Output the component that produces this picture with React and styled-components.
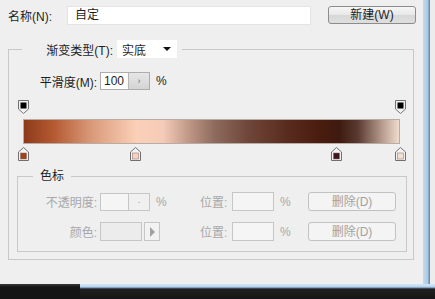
import styled, { createGlobalStyle } from "styled-components";

const GlobalStyle = createGlobalStyle`
  html, body {
    margin: 0;
    padding: 0;
    background: #efefef;
  }
  body {
    font-family: "Liberation Sans", "Noto Sans CJK SC", sans-serif;
    font-size: 12px;
    color: #1e1e1e;
  }
`;

const gradientStops = [
  "#8e3a1a 0%",
  "#b55a32 8%",
  "#d99a7a 18%",
  "#fbd0b8 30%",
  "#f4ccb7 37%",
  "#b89080 45%",
  "#8c6a5c 51%",
  "#6e4638 60%",
  "#5a2c20 70%",
  "#4a1c10 79%",
  "#3e1a0e 84%",
  "#5a3a30 89%",
  "#b09488 95%",
  "#f0dccc 100%",
];

const topStops = [{ at: 0 }, { at: 100 }];

const bottomStops = [
  { at: 0, color: "#a0401c" },
  { at: 29.8, color: "#f6d2c2" },
  { at: 83, color: "#3e1620" },
  { at: 100, color: "#f2e0d2" },
];

export default function App() {
  return (
    <>
      <GlobalStyle />
      <Screen>
        <Dialog>
          <NameRow>
            <NameLabel>名称(N):</NameLabel>
            <NameInput>自定</NameInput>
            <Button>新建(W)</Button>
          </NameRow>

          <Group>
            <GroupLegend>
              <LegendLabel>渐变类型(T):</LegendLabel>
              <Select>
                实底
                <SelectArrow />
              </Select>
            </GroupLegend>

            <SmoothRow>
              <SmoothLabel>平滑度(M):</SmoothLabel>
              <SpinBox>
                <SpinValue>100</SpinValue>
                <SpinButton>›</SpinButton>
              </SpinBox>
              <Percent>%</Percent>
            </SmoothRow>

            <Editor>
              <StopTrack>
                {topStops.map((s) => (
                  <StopHolder key={s.at} style={{ left: `${s.at}%` }}>
                    <svg width="11" height="14" viewBox="0 0 11 14">
                      <path
                        d="M0.5 0.5 H10.5 V9 L5.5 13.5 L0.5 9 Z"
                        fill="#f2f2f2"
                        stroke="#707070"
                      />
                      <rect x="2.5" y="2.5" width="6" height="6" fill="#000" />
                    </svg>
                  </StopHolder>
                ))}
              </StopTrack>
              <GradientBar />
              <StopTrack $bottom>
                {bottomStops.map((s) => (
                  <StopHolder key={s.at} style={{ left: `${s.at}%` }}>
                    <svg width="11" height="14" viewBox="0 0 11 14">
                      <path
                        d="M0.5 5 L5.5 0.5 L10.5 5 V13.5 H0.5 Z"
                        fill="#f2f2f2"
                        stroke="#707070"
                      />
                      <rect
                        x="2.5"
                        y="6"
                        width="6"
                        height="6"
                        fill={s.color}
                        stroke="#8a6a60"
                        strokeWidth="0.5"
                      />
                    </svg>
                  </StopHolder>
                ))}
              </StopTrack>
            </Editor>

            <StopGroup>
              <StopLegend>色标</StopLegend>
              <StopGrid>
                <FieldLabel>不透明度:</FieldLabel>
                <Cell>
                  <SpinBox $disabled>
                    <SpinValue $disabled />
                    <SpinButton $disabled>·</SpinButton>
                  </SpinBox>
                  <Percent $disabled>%</Percent>
                </Cell>
                <FieldLabel $left>位置:</FieldLabel>
                <BlankInput />
                <Percent $disabled>%</Percent>
                <Button $disabled>删除(D)</Button>

                <FieldLabel>颜色:</FieldLabel>
                <Cell>
                  <ColorBox />
                  <ArrowButton />
                </Cell>
                <FieldLabel $left>位置:</FieldLabel>
                <BlankInput />
                <Percent $disabled>%</Percent>
                <Button $disabled>删除(D)</Button>
              </StopGrid>
            </StopGroup>
          </Group>
        </Dialog>
        <RightFrame />
        <BottomFrame>
          <TaskbarLeft />
          <TaskbarRight />
        </BottomFrame>
      </Screen>
    </>
  );
}

const Screen = styled.div`
  width: 435px;
  height: 299px;
  display: grid;
  grid-template-columns: 423px 12px;
  grid-template-rows: 284px 15px;
  overflow: hidden;
`;

const Dialog = styled.div`
  display: flex;
  flex-direction: column;
`;

const RightFrame = styled.div`
  background: linear-gradient(
    to right,
    #c4dbef 0px,
    #a9c9e8 5px,
    #6f8eae 6px,
    #6f8eae 7px,
    #ececec 7px
  );
`;

const BottomFrame = styled.div`
  grid-column: 1 / -1;
  display: flex;
`;

const TaskbarLeft = styled.div`
  width: 80px;
  background: linear-gradient(#3a3a3a, #151515 3px);
`;

const TaskbarRight = styled.div`
  flex: 1;
  background: linear-gradient(
    #d6e8f7 0px,
    #b3d2ee 3px,
    #5f7890 4px,
    #202020 5px,
    #151515
  );
`;

const NameRow = styled.div`
  display: flex;
  align-items: center;
  padding: 5px 0 0 8px;
  height: 20px;
`;

const NameLabel = styled.span`
  width: 59px;
`;

const NameInput = styled.div`
  width: 244px;
  height: 19px;
  box-sizing: border-box;
  background: #fff;
  border: 1px solid #e4e4e4;
  padding: 0 0 0 7px;
  line-height: 17px;
`;

const Button = styled.div`
  box-sizing: border-box;
  width: 88px;
  height: ${(p) => (p.$disabled ? 19 : 18)}px;
  margin-left: ${(p) => (p.$disabled ? 0 : 17)}px;
  border: 1px solid ${(p) => (p.$disabled ? "#c2c2c2" : "#8c8c8c")};
  border-radius: 3px;
  background: ${(p) =>
    p.$disabled
      ? "#f4f4f4"
      : "linear-gradient(#f6f6f6, #e8e8e8 50%, #d8d8d8 51%, #dedede)"};
  color: ${(p) => (p.$disabled ? "#a2a2a2" : "#1e1e1e")};
  display: flex;
  align-items: center;
  justify-content: center;
  line-height: 1;
`;

const Group = styled.fieldset`
  margin: 15px 9px 0 8px;
  padding: 0 0 7px 0;
  border: 1px solid #c8c8c8;
  min-width: 0;
`;

const GroupLegend = styled.legend`
  margin-left: 13px;
  padding: 0 5px 0 0;
  display: flex;
  align-items: center;
  height: 18px;
`;

const LegendLabel = styled.span`
  width: 95px;
  display: flex;
  justify-content: flex-end;
  padding-right: 4px;
  box-sizing: border-box;
  white-space: nowrap;
`;

const Select = styled.div`
  width: 60px;
  height: 18px;
  box-sizing: border-box;
  background: #fff;
  display: flex;
  align-items: center;
  justify-content: space-between;
  padding: 0 6px 0 5px;
`;

const SelectArrow = styled.span`
  width: 0;
  height: 0;
  border-left: 4px solid transparent;
  border-right: 4px solid transparent;
  border-top: 4px solid #111;
`;

const SmoothRow = styled.div`
  display: flex;
  align-items: center;
  margin: 14px 0 0 0;
  height: 18px;
`;

const SmoothLabel = styled.span`
  width: 91px;
  display: flex;
  justify-content: flex-end;
  padding-right: 3px;
  white-space: nowrap;
  box-sizing: border-box;
`;

const SpinBox = styled.div`
  display: flex;
  height: 18px;
  border: 1px solid ${(p) => (p.$disabled ? "#c6c6c6" : "#adadad")};
  box-sizing: border-box;
`;

const SpinValue = styled.div`
  width: 28px;
  background: ${(p) => (p.$disabled ? "#f5f5f5" : "#fff")};
  border-right: 1px solid ${(p) => (p.$disabled ? "#c6c6c6" : "#b5b5b5")};
  display: flex;
  align-items: center;
  padding-left: 3px;
  box-sizing: border-box;
`;

const SpinButton = styled.div`
  width: 20px;
  background: ${(p) =>
    p.$disabled ? "#f0f0f0" : "linear-gradient(#e6e6e6, #d4d4d4)"};
  color: ${(p) => (p.$disabled ? "#909090" : "#707070")};
  font-size: 9px;
  display: flex;
  align-items: center;
  justify-content: center;
`;

const Percent = styled.span`
  margin-left: 6px;
  color: ${(p) => (p.$disabled ? "#a8a8a8" : "#1e1e1e")};
`;

const Editor = styled.div`
  width: 377px;
  margin: 10px 0 0 14px;
`;

const StopTrack = styled.div`
  position: relative;
  height: 14px;
  margin: ${(p) => (p.$bottom ? "3px 0 0" : "0 0 5px")};
`;

const StopHolder = styled.div`
  position: absolute;
  top: 0;
  width: 11px;
  height: 14px;
  transform: translateX(-5px);
  svg {
    display: block;
  }
`;

const GradientBar = styled.div`
  height: 25px;
  box-sizing: border-box;
  border: 1px solid #b8aca4;
  background: linear-gradient(to right, ${gradientStops.join(", ")});
`;

const StopGroup = styled.fieldset`
  margin: 8px 6px 0 8px;
  padding: 9px 0 10px 0;
  border: 1px solid #c8c8c8;
  min-width: 0;
`;

const StopLegend = styled.legend`
  margin-left: 15px;
  padding: 0 7px;
  line-height: 14px;
  color: #1e1e1e;
`;

const StopGrid = styled.div`
  display: grid;
  grid-template-columns: 82px 100px 32px 42px 34px 88px;
  grid-auto-rows: 19px;
  row-gap: 11px;
  align-items: center;
`;

const FieldLabel = styled.span`
  color: #a8a8a8;
  text-align: ${(p) => (p.$left ? "left" : "right")};
  padding-right: ${(p) => (p.$left ? 0 : 3)}px;
`;

const Cell = styled.div`
  display: flex;
  align-items: center;
`;

const BlankInput = styled.div`
  height: 19px;
  box-sizing: border-box;
  border: 1px solid #c6c6c6;
  background: #f5f5f5;
`;

const ColorBox = styled.div`
  width: 42px;
  height: 19px;
  box-sizing: border-box;
  border: 1px solid #c6c6c6;
  background: #ececec;
`;

const ArrowButton = styled.div`
  width: 16px;
  height: 19px;
  margin-left: 2px;
  box-sizing: border-box;
  border: 1px solid #c6c6c6;
  background: #f2f2f2;
  display: flex;
  align-items: center;
  justify-content: center;
  &::after {
    content: "";
    border-top: 5px solid transparent;
    border-bottom: 5px solid transparent;
    border-left: 5px solid #a0a0a0;
  }
`;
